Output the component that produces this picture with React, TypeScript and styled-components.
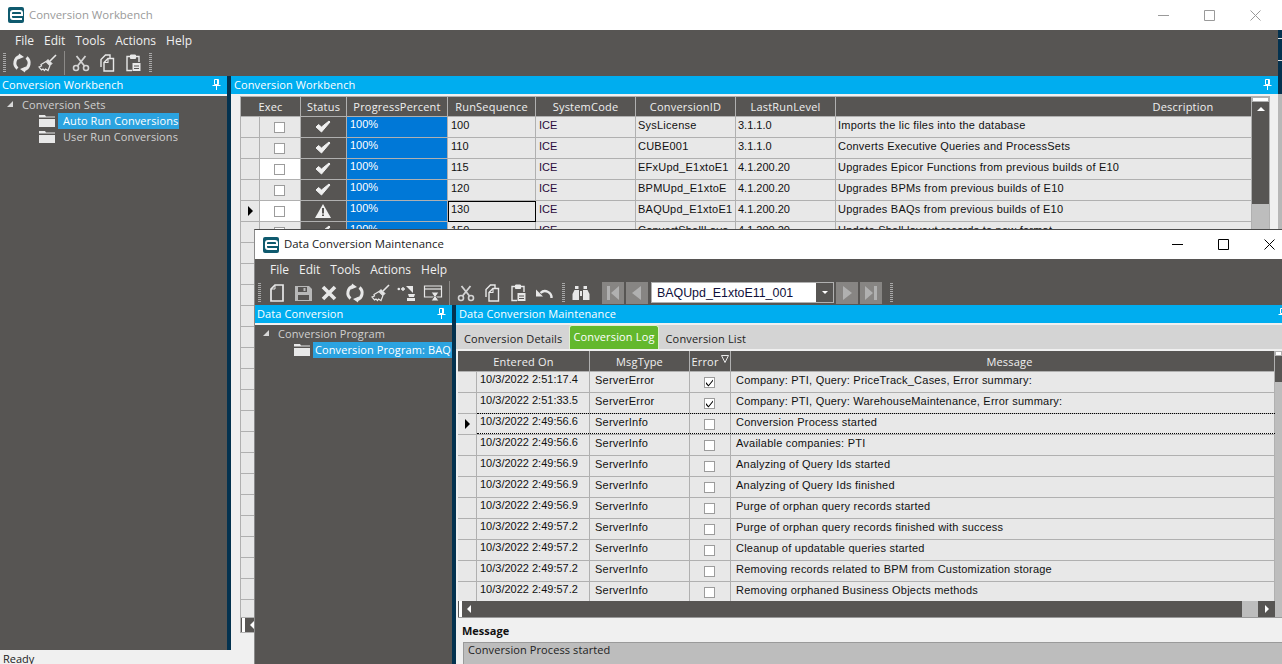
import React from "react";
import styled, { createGlobalStyle } from "styled-components";

const GlobalStyle = createGlobalStyle`
  html, body {
    margin: 0;
    padding: 0;
    overflow: hidden;
  }
  body {
    font-family: "Liberation Sans", Arial, sans-serif;
    font-size: 11px;
  }
`;

const DARK = "#575553";
const BLUE = "#00adef";
const LIGHT = "#e8e8e8";
const LINE = "#b0b0b0";
const NAVY = "#04324f";
const TRACK = "#bdbdbd";

const Icon: React.FC<{ children: React.ReactNode }> = ({ children }) => (
  <svg width={20} height={20} viewBox="0 0 20 20" fill="none" stroke="#e8e8e8" strokeWidth="1.6" style={{ flex: "none" }}>
    {children}
  </svg>
);

const SyncIcon = () => (
  <Icon>
    <path d="M5.500 15.500A7 7 0 0 1 8 3.300" strokeWidth="3" />
    <path d="M14.500 4.500A7 7 0 0 1 12 16.700" strokeWidth="3" />
    <path d="M7 .5l5 3.500-6 2.500zM13 19.500L8 16l6-2.500z" fill="#e8e8e8" stroke="none" />
  </Icon>
);
const BroomIcon = () => (
  <Icon>
    <path d="M18 2l-6 6" strokeWidth="1.600" />
    <path d="M10 6.500l4 4-1.500 1.500-4-4z" fill="#e8e8e8" stroke="#e8e8e8" strokeWidth="1" />
    <path d="M8 8.500l4 4-2 5-2.500-1.500-1 1.500-1.500-1.500-1.500 1-2.500-3 2.500-1-.5-1.500z" strokeWidth="1.200" />
  </Icon>
);
const CutIcon = () => (
  <Icon>
    <circle cx="5" cy="15" r="2.500" stroke="#d4d4d4" />
    <circle cx="15" cy="15" r="2.500" stroke="#d4d4d4" />
    <path d="M6.500 13L14.500 3M13.500 13L5.500 3" stroke="#d4d4d4" strokeWidth="1.800" />
  </Icon>
);
const CopyIcon = () => (
  <Icon>
    <path d="M4 14V6.500L8.500 2H13v3" strokeWidth="1.400" />
    <path d="M7 9.500l4-4h5.500V18H7z" strokeWidth="1.400" />
    <path d="M11 5.500v4H7" strokeWidth="1.100" />
  </Icon>
);
const PasteIcon = () => (
  <Icon>
    <path d="M7 3.500H4v14h5M13 3.500h3V9" strokeWidth="1.400" />
    <path d="M7.500 2h5v3.500h-5z" fill="#e8e8e8" stroke="#e8e8e8" strokeWidth="1" />
    <path d="M9.500 10h8v8h-8z" fill="#e8e8e8" stroke="none" />
    <path d="M11 13h5M11 15.500h5" stroke="#575553" strokeWidth="1" />
  </Icon>
);
const NewIcon = () => (
  <Icon>
    <path d="M8 2h8v16H4V6z" strokeWidth="1.700" />
    <path d="M8 2.500V6H4" strokeWidth="1" />
  </Icon>
);
const SaveIcon = () => (
  <Icon>
    <path d="M2 3h14l3 3v12H2z" fill="#b8b8b8" stroke="none" />
    <path d="M5 4h9v5H5zM5 12h11v5H5z" fill="#575553" stroke="none" />
    <path d="M10.500 5h2v3h-2z" fill="#b8b8b8" stroke="none" />
  </Icon>
);
const DeleteIcon = () => (
  <Icon>
    <path d="M4 4l12 12M16 4L4 16" strokeWidth="3.600" />
  </Icon>
);
const ArrowIcon = () => (
  <Icon>
    <circle cx="1.800" cy="6" r="1.300" fill="#e8e8e8" stroke="none" />
    <path d="M4 6h4M6 4v4" strokeWidth="1.400" />
    <path d="M9 3h7v7z" fill="#e8e8e8" stroke="none" />
    <path d="M11 11h7l-1 3h-5zM10 15h8v3h-8z" fill="#e8e8e8" stroke="none" />
  </Icon>
);
const ReportIcon = () => (
  <Icon>
    <path d="M1.500 3h17v11h-17z" strokeWidth="1.200" />
    <path d="M1.500 6h17" strokeWidth="1.200" />
    <path d="M8 9h8l-3 4.500 3 4.500H8l3-4.500z" fill="#e8e8e8" stroke="#575553" strokeWidth="1" />
  </Icon>
);
const UndoIcon = () => (
  <Icon>
    <path d="M17.500 15a6.500 6.500 0 0 0-11-5" strokeWidth="2.400" />
    <path d="M2 6.500v7h7z" fill="#e8e8e8" stroke="none" />
  </Icon>
);
const BinocularsIcon = () => (
  <Icon>
    <path d="M3.500 7h4.500v10H1.500v-6zM12 7h4.500l2 4v6H12z" fill="#e8e8e8" stroke="none" />
    <path d="M4 3h3.500v3H4zM12.500 3H16v3h-3.500zM9 8h2v5H9z" fill="#e8e8e8" stroke="none" />
  </Icon>
);
const PinIcon = () => (
  <svg width="9" height="11" viewBox="0 0 9 11" fill="none" stroke="#fff" style={{ flex: "none" }}>
    <path d="M2.500.5h4v5h-4z" />
    <path d="M.5 6.500h8" />
    <path d="M4.500 7v4" />
    <path d="M5.500 1v4" />
  </svg>
);
const FolderIcon = () => (
  <svg width="16" height="12" viewBox="0 0 16 12" style={{ flex: "none" }}>
    <path d="M0 2.500V0h6l1 1.500h9v1z" fill="#e8e8e8" />
    <path d="M0 4h16v8H0z" fill="#e8e8e8" />
  </svg>
);
const CheckGlyph = () => (
  <svg width="16" height="14" viewBox="0 0 16 14">
    <path d="M1 7l5.500 5L15 2l-1-1-7.500 6L3.500 4.500z" fill="#f0f0f0" stroke="#f0f0f0" />
  </svg>
);
const WarnGlyph = () => (
  <svg width="16" height="14" viewBox="0 0 16 14">
    <path d="M8 0l8 14H0z" fill="#f0f0f0" />
    <path d="M7 4h2v5.500H7zM7 10.500h2V12H7z" fill="#575553" />
  </svg>
);

const Desktop = styled.div`
  width: 1282px;
  height: 664px;
  position: relative;
  overflow: hidden;
  display: flex;
`;

const BackWindow = styled.div`
  width: 1278px;
  height: 664px;
  flex: none;
  display: flex;
  flex-direction: column;
  background: #f0f0f0;
`;

const DesktopEdge = styled.div`
  flex: 1;
  background: linear-gradient(
    to bottom,
    #fff 0 30px,
    ${NAVY} 30px 38px,
    #e0e0e0 38px 39px,
    ${NAVY} 39px 60px,
    #e0e0e0 60px 61px,
    ${NAVY} 61px 94px,
    #b8b8b8 94px
  );
`;

const FrontWindow = styled.div`
  position: absolute;
  left: 254px;
  top: 229px;
  width: 1028px;
  height: 435px;
  display: flex;
  flex-direction: column;
  background: ${LIGHT};
  border-top: 1px solid #4a4a4a;
  border-left: 1px solid #8a8a8a;
  box-sizing: border-box;
`;

const TitleBar = styled.div<{ $h: number }>`
  height: ${(p) => p.$h}px;
  flex: none;
  display: flex;
  align-items: center;
  padding-left: 8px;
  gap: 5px;
  background: #fff;
`;

const AppLogo = styled.div`
  width: 16px;
  height: 16px;
  border-radius: 2px;
  background: #0f5a6e;
  display: flex;
  align-items: center;
  justify-content: center;
`;

const WindowTitle = styled.span<{ $active?: boolean }>`
  font-family: "Open Sans", sans-serif;
  font-size: 11.4px;
  color: ${(p) => (p.$active ? "#1a1a1a" : "#9a9a9a")};
  flex: 1;
  margin-top: -2px;
`;

const WindowButtons = styled.div<{ $active?: boolean; $right: number }>`
  display: flex;
  gap: 35px;
  padding-right: ${(p) => p.$right}px;
  color: ${(p) => (p.$active ? "#000" : "#9a9a9a")};
`;

const WinGlyph = styled.svg`
  width: 11px;
  height: 11px;
  fill: none;
  stroke: currentColor;
`;

const MenuBar = styled.div<{ $h: number }>`
  height: ${(p) => p.$h}px;
  flex: none;
  background: ${DARK};
  display: flex;
  align-items: center;
  padding-left: 15px;
  gap: 10px;
  color: #f0f0f0;
  font-family: "Open Sans", sans-serif;
  font-size: 12px;
`;

const ToolBar = styled.div<{ $h: number; $pad: number }>`
  height: ${(p) => p.$h}px;
  flex: none;
  background: ${DARK};
  display: flex;
  align-items: center;
  padding-left: ${(p) => p.$pad}px;
  gap: 6px;
`;

const Grip = styled.div<{ $ml?: number }>`
  width: 3px;
  height: 20px;
  flex: none;
  margin-left: ${(p) => p.$ml ?? 0}px;
  background: repeating-linear-gradient(to bottom, #a8a8a8 0 1px, transparent 1px 2px);
`;

const ToolSep = styled.div`
  width: 1px;
  height: 24px;
  flex: none;
  background: #8c8a88;
`;

const NavButton = styled.div<{ $ml: number }>`
  width: 22px;
  height: 22px;
  flex: none;
  background: #878583;
  display: flex;
  align-items: center;
  justify-content: center;
  margin-left: ${(p) => p.$ml}px;
`;

const NavGlyph = styled.svg`
  width: 16px;
  height: 16px;
  fill: #b0b0b0;
`;

const Combo = styled.div`
  width: 183px;
  height: 21px;
  flex: none;
  margin-left: -3px;
  box-sizing: border-box;
  border: 1px solid #b0b0b0;
  background: #fff;
  display: flex;
  align-items: center;
  padding-left: 5px;
  font-size: 12.4px;
  color: #10103a;
  justify-content: space-between;
`;

const ComboArrow = styled.div`
  width: 17px;
  height: 19px;
  background: ${DARK};
  display: flex;
  align-items: center;
  justify-content: center;
`;

const Triangle = styled.div<{ $dir: "left" | "right" | "up" | "down"; $size: number }>`
  width: 0;
  height: 0;
  flex: none;
  ${(p) => {
    const s = p.$size;
    const across = `${s}px solid transparent`;
    const solid = `${s}px solid #fff`;
    if (p.$dir === "left") return `border-top: ${across}; border-bottom: ${across}; border-right: ${solid};`;
    if (p.$dir === "right") return `border-top: ${across}; border-bottom: ${across}; border-left: ${solid};`;
    if (p.$dir === "up") return `border-left: ${across}; border-right: ${across}; border-bottom: ${solid};`;
    return `border-left: ${across}; border-right: ${across}; border-top: ${solid};`;
  }}
`;

const Workspace = styled.div`
  flex: 1;
  min-height: 0;
  display: flex;
`;

const SidePanel = styled.div<{ $w: number }>`
  width: ${(p) => p.$w}px;
  flex: none;
  display: flex;
  flex-direction: column;
  background: ${DARK};
`;

const Splitter = styled.div`
  width: 4px;
  flex: none;
  background: ${NAVY};
`;

const MainPanel = styled.div`
  flex: 1;
  min-width: 0;
  display: flex;
  flex-direction: column;
  background: #f0f0f0;
`;

const PanelHeader = styled.div<{ $left: number }>`
  height: 18px;
  flex: none;
  box-sizing: border-box;
  background: ${BLUE};
  color: #fff;
  font-family: "Open Sans", sans-serif;
  font-size: 11px;
  letter-spacing: 0.1px;
  display: flex;
  align-items: center;
  justify-content: space-between;
  padding: 0 6px 2px ${(p) => p.$left}px;
  white-space: nowrap;
  overflow: hidden;
`;

const CutOffPin = styled.div`
  margin-right: -11px;
  display: flex;
`;

const PanelGap = styled.div`
  height: 2px;
  flex: none;
  background: #f0f0f0;
`;

const Tree = styled.div`
  padding-top: 1px;
  color: #d0d0d0;
  font-family: "Open Sans", sans-serif;
  font-size: 11px;
  letter-spacing: 0.1px;
`;

const TreeRow = styled.div<{ $indent: number; $root?: boolean }>`
  height: 16px;
  box-sizing: border-box;
  padding-bottom: ${(p) => (p.$root ? 2 : 0)}px;
  display: flex;
  align-items: center;
  padding-left: ${(p) => p.$indent}px;
  white-space: nowrap;
  overflow: hidden;
`;

const Expander = styled.div`
  width: 0;
  height: 0;
  margin-right: 9px;
  border-left: 6px solid transparent;
  border-bottom: 6px solid #d8d8d8;
`;

const TreeLabel = styled.span<{ $selected?: boolean; $pad: number }>`
  margin-left: 3px;
  padding: 0 1px 0 ${(p) => p.$pad}px;
  line-height: 16px;
  background: ${(p) => (p.$selected ? "#2ba3e0" : "transparent")};
  color: ${(p) => (p.$selected ? "#fff" : "#d0d0d0")};
`;

const BackGridArea = styled.div`
  flex: 1;
  min-height: 0;
  padding-left: 9px;
`;

const GridFrame = styled.div`
  width: 1030px;
  height: 521px;
  box-sizing: border-box;
  border: 1px solid ${LINE};
  border-bottom: none;
  display: flex;
  overflow: hidden;
`;

const Grid = styled.div<{ $columns: string; $head: number }>`
  flex: 1;
  display: grid;
  grid-template-columns: ${(p) => p.$columns};
  grid-template-rows: ${(p) => p.$head}px;
  grid-auto-rows: 21px;
  align-content: start;
  position: relative;
`;

const VBar = styled.div<{ $w: number }>`
  width: ${(p) => p.$w}px;
  flex: none;
  display: flex;
  flex-direction: column;
  background: ${TRACK};
`;

const VBarButton = styled.div<{ $h: number }>`
  height: ${(p) => p.$h}px;
  flex: none;
  background: ${DARK};
  display: flex;
  flex-direction: column;
  align-items: center;
`;

const ScrollNotch = styled.div`
  width: 100%;
  height: 5px;
  flex: none;
  box-sizing: border-box;
  background: #fff;
  border: 1px solid ${LINE};
`;

const UpArrowSlot = styled.div`
  margin-top: 5px;
`;

const HeaderCell = styled.div<{ $span?: number; $padLeft?: number }>`
  grid-column: span ${(p) => p.$span ?? 1};
  box-sizing: border-box;
  background: ${DARK};
  color: #f0f0f0;
  font-family: "Open Sans", sans-serif;
  font-size: 11px;
  letter-spacing: 0.2px;
  display: flex;
  align-items: center;
  justify-content: center;
  padding-left: ${(p) => p.$padLeft ?? 0}px;
  border-right: 1px solid ${LINE};
  border-bottom: 1px solid ${LINE};
  white-space: nowrap;
  overflow: hidden;
`;

const FilterMark = styled.svg`
  width: 8px;
  height: 8px;
  margin: -4px 0 0 2px;
  flex: none;
  fill: none;
  stroke: #e8e8e8;
`;

const Cell = styled.div<{
  $bg?: string;
  $color?: string;
  $focus?: boolean;
  $center?: boolean;
  $dy?: number;
  $pad?: number;
  $tight?: boolean;
}>`
  box-sizing: border-box;
  background: ${(p) => p.$bg ?? LIGHT};
  color: ${(p) => p.$color ?? "#111"};
  border-right: 1px solid ${LINE};
  border-bottom: 1px solid ${LINE};
  padding: ${(p) => p.$dy ?? 2}px ${(p) => (p.$center ? 1 : 0)}px 0 ${(p) => (p.$center ? 0 : p.$pad ?? 3)}px;
  display: flex;
  align-items: ${(p) => (p.$center ? "center" : "flex-start")};
  justify-content: ${(p) => (p.$center ? "center" : "flex-start")};
  white-space: nowrap;
  overflow: hidden;
  line-height: 13px;
  font-size: 11px;
  letter-spacing: ${(p) => (p.$tight ? 0 : 0.23)}px;
  ${(p) => (p.$focus ? "outline: 1px solid #000; outline-offset: -1px;" : "")}
`;

const FocusRow = styled.div`
  position: absolute;
  top: 62px;
  left: 19px;
  right: 0;
  height: 21px;
  box-sizing: border-box;
  border-top: 1px dotted #000;
  border-bottom: 1px dotted #000;
  pointer-events: none;
`;

const Box = styled.div`
  width: 11px;
  height: 11px;
  box-sizing: border-box;
  background: #fff;
  border: 1px solid #9c9c9c;
  display: flex;
  align-items: center;
  justify-content: center;
`;

const RowArrow = styled.div`
  width: 0;
  height: 0;
  margin-left: 2px;
  border-left: 5px solid #000;
  border-top: 5px solid transparent;
  border-bottom: 5px solid transparent;
`;

const BackHScroll = styled.div`
  width: 1030px;
  height: 16px;
  box-sizing: border-box;
  background: ${DARK};
  border: 1px solid ${LINE};
  display: flex;
  align-items: center;
`;

const ScrollStripe = styled.div`
  width: 3px;
  align-self: stretch;
  flex: none;
  margin-left: 1px;
  background: #fff;
`;

const ArrowSlot = styled.div`
  width: 14px;
  flex: none;
  display: flex;
  align-items: center;
  justify-content: center;
`;

const StatusBar = styled.div`
  height: 14px;
  flex: none;
  background: #f0f0f0;
  padding-left: 3px;
  font-family: "Open Sans", sans-serif;
  font-size: 11px;
  line-height: 18px;
  color: #222;
`;

const TabStrip = styled.div`
  height: 24px;
  flex: none;
  padding-left: 4px;
  background: #d4d4d4;
  display: flex;
  align-items: flex-end;
  gap: 3px;
`;

const Tab = styled.div<{ $active?: boolean }>`
  height: ${(p) => (p.$active ? 24 : 20)}px;
  box-sizing: border-box;
  padding: 0 ${(p) => (p.$active ? 3 : 4)}px 2px;
  font-family: "Open Sans", sans-serif;
  font-size: 11px;
  letter-spacing: 0.15px;
  display: flex;
  align-items: center;
  color: ${(p) => (p.$active ? "#fff" : "#222")};
  background: ${(p) => (p.$active ? "#63b82d" : "transparent")};
  border: ${(p) => (p.$active ? "1px solid #dff0d0" : "none")};
  border-bottom: none;
  border-radius: ${(p) => (p.$active ? "3px 3px 0 0" : "0")};
  white-space: nowrap;
`;

const LogArea = styled.div`
  height: 250px;
  flex: none;
  margin: 2px 0 0 2px;
  display: flex;
  overflow: hidden;
`;

const HScroll = styled.div`
  height: 17px;
  flex: none;
  margin-left: 2px;
  display: flex;
  align-items: stretch;
  background: ${DARK};
  border-bottom: 1px solid #999;
  box-sizing: border-box;
`;

const HScrollFill = styled.div`
  flex: 1;
`;

const HScrollThumb = styled.div<{ $w: number }>`
  width: ${(p) => p.$w}px;
  flex: none;
  background: ${TRACK};
`;

const RightSlot = styled.div`
  width: 17px;
  flex: none;
  display: flex;
  align-items: center;
  justify-content: center;
`;

const MessageLabel = styled.div`
  height: 24px;
  flex: none;
  box-sizing: border-box;
  padding: 0 0 0 6px;
  font-weight: bold;
  font-family: "Open Sans", sans-serif;
  font-size: 11px;
  display: flex;
  align-items: center;
  color: #111;
`;

const MessageBox = styled.div`
  flex: 1;
  margin-left: 7px;
  padding: 0 0 0 4px;
  background: ${TRACK};
  border-top: 1px solid #9a9a9a;
  border-left: 1px solid #9a9a9a;
  font-family: "Open Sans", sans-serif;
  font-size: 11px;
  line-height: 14px;
  letter-spacing: 0.1px;
  color: #222;
`;

const backRows = [
  ["100", "ICE", "SysLicense", "3.1.1.0", "Imports the lic files into the database"],
  ["110", "ICE", "CUBE001", "3.1.1.0", "Converts Executive Queries and ProcessSets"],
  ["115", "ICE", "EFxUpd_E1xtoE1", "4.1.200.20", "Upgrades Epicor Functions from previous builds of E10"],
  ["120", "ICE", "BPMUpd_E1xtoE", "4.1.200.20", "Upgrades BPMs from previous builds of E10"],
  ["130", "ICE", "BAQUpd_E1xtoE1", "4.1.200.20", "Upgrades BAQs from previous builds of E10"],
  ["150", "ICE", "ConvertShellLayo", "4.1.200.20", "Update Shell layout records to new format"],
];

const logRows: [string, string, boolean, string][] = [
  ["10/3/2022 2:51:17.4", "ServerError", true, "Company: PTI, Query: PriceTrack_Cases, Error summary:"],
  ["10/3/2022 2:51:33.5", "ServerError", true, "Company: PTI, Query: WarehouseMaintenance, Error summary:"],
  ["10/3/2022 2:49:56.6", "ServerInfo", false, "Conversion Process started"],
  ["10/3/2022 2:49:56.6", "ServerInfo", false, "Available companies: PTI"],
  ["10/3/2022 2:49:56.9", "ServerInfo", false, "Analyzing of Query Ids started"],
  ["10/3/2022 2:49:56.9", "ServerInfo", false, "Analyzing of Query Ids finished"],
  ["10/3/2022 2:49:56.9", "ServerInfo", false, "Purge of orphan query records started"],
  ["10/3/2022 2:49:57.2", "ServerInfo", false, "Purge of orphan query records finished with success"],
  ["10/3/2022 2:49:57.2", "ServerInfo", false, "Cleanup of updatable queries started"],
  ["10/3/2022 2:49:57.2", "ServerInfo", false, "Removing records related to BPM from Customization storage"],
  ["10/3/2022 2:49:57.2", "ServerInfo", false, "Removing orphaned Business Objects methods"],
];

const Logo = () => (
  <AppLogo>
    <svg width="13" height="10" viewBox="0 0 13 10" fill="none" stroke="#fff" strokeWidth="2">
      <path d="M12 9H3a2 2 0 0 1-2-2V3a2 2 0 0 1 2-2h7a2 2 0 0 1 2 2v2H2" />
    </svg>
  </AppLogo>
);

const MinMaxClose = () => (
  <>
    <WinGlyph viewBox="0 0 11 11"><path d="M0 5.500h11" /></WinGlyph>
    <WinGlyph viewBox="0 0 11 11"><path d="M.5.5h10v10H.5z" /></WinGlyph>
    <WinGlyph viewBox="0 0 11 11"><path d="M.5.5l10 10M10.500.5l-10 10" /></WinGlyph>
  </>
);

const Menus = () => (
  <>
    <span>File</span>
    <span>Edit</span>
    <span>Tools</span>
    <span>Actions</span>
    <span>Help</span>
  </>
);

const App: React.FC = () => {
  return (
    <Desktop>
      <GlobalStyle />
      <BackWindow>
        <TitleBar $h={30}>
          <Logo />
          <WindowTitle>Conversion Workbench</WindowTitle>
          <WindowButtons $right={17}>
            <MinMaxClose />
          </WindowButtons>
        </TitleBar>
        <MenuBar $h={20}>
          <Menus />
        </MenuBar>
        <ToolBar $h={26} $pad={3}>
          <Grip />
          <SyncIcon />
          <BroomIcon />
          <ToolSep />
          <CutIcon />
          <CopyIcon />
          <PasteIcon />
          <Grip />
        </ToolBar>
        <Workspace>
          <SidePanel $w={227}>
            <PanelHeader $left={2}>
              Conversion Workbench <PinIcon />
            </PanelHeader>
            <PanelGap />
            <Tree>
              <TreeRow $indent={7} $root>
                <Expander />
                Conversion Sets
              </TreeRow>
              <TreeRow $indent={39}>
                <FolderIcon />
                <TreeLabel $selected $pad={5}>Auto Run Conversions</TreeLabel>
              </TreeRow>
              <TreeRow $indent={39}>
                <FolderIcon />
                <TreeLabel $pad={5}>User Run Conversions</TreeLabel>
              </TreeRow>
            </Tree>
          </SidePanel>
          <Splitter />
          <MainPanel>
            <PanelHeader $left={3}>
              Conversion Workbench <PinIcon />
            </PanelHeader>
            <PanelGap />
            <BackGridArea>
              <GridFrame>
                <Grid $head={20} $columns="19px 41px 46px 101px 88px 100px 100px 100px 416px">
                  <HeaderCell $span={2}>Exec</HeaderCell>
                  <HeaderCell>Status</HeaderCell>
                  <HeaderCell>ProgressPercent</HeaderCell>
                  <HeaderCell>RunSequence</HeaderCell>
                  <HeaderCell>SystemCode</HeaderCell>
                  <HeaderCell>ConversionID</HeaderCell>
                  <HeaderCell>LastRunLevel</HeaderCell>
                  <HeaderCell $padLeft={279}>Description</HeaderCell>
                  {backRows.map((r, i) => (
                    <React.Fragment key={r[0]}>
                      <Cell $center $dy={0}>{i === 4 && <RowArrow />}</Cell>
                      <Cell $center $dy={0} $bg={i === 2 || i === 4 ? "#fff" : LIGHT}>
                        <Box />
                      </Cell>
                      <Cell $center $dy={0} $bg={DARK}>
                        {i === 4 ? <WarnGlyph /> : <CheckGlyph />}
                      </Cell>
                      <Cell $bg="#0078d7" $color="#fff" $dy={1} $tight>100%</Cell>
                      <Cell $focus={i === 4} $tight>{r[0]}</Cell>
                      <Cell $color="#2a0a3a" $tight>{r[1]}</Cell>
                      <Cell $pad={2}>{r[2]}</Cell>
                      <Cell $tight $pad={2}>{r[3]}</Cell>
                      <Cell $pad={2}>{r[4]}</Cell>
                    </React.Fragment>
                  ))}
                  {Array.from({ length: 18 }).map((_, i) => (
                    <React.Fragment key={i}>
                      <Cell />
                      <Cell />
                      <Cell />
                      <Cell />
                      <Cell />
                      <Cell />
                      <Cell />
                      <Cell />
                      <Cell />
                    </React.Fragment>
                  ))}
                </Grid>
                <VBar $w={17}>
                  <VBarButton $h={107}>
                    <ScrollNotch />
                    <UpArrowSlot>
                      <Triangle $dir="up" $size={4} />
                    </UpArrowSlot>
                  </VBarButton>
                </VBar>
              </GridFrame>
              <BackHScroll>
                <ScrollStripe />
                <ArrowSlot>
                  <Triangle $dir="left" $size={4} />
                </ArrowSlot>
              </BackHScroll>
            </BackGridArea>
          </MainPanel>
        </Workspace>
        <StatusBar>Ready</StatusBar>
      </BackWindow>
      <DesktopEdge />

      <FrontWindow>
        <TitleBar $h={29}>
          <Logo />
          <WindowTitle $active>Data Conversion Maintenance</WindowTitle>
          <WindowButtons $active $right={7}>
            <MinMaxClose />
          </WindowButtons>
        </TitleBar>
        <MenuBar $h={21}>
          <Menus />
        </MenuBar>
        <ToolBar $h={25} $pad={3}>
          <Grip />
          <NewIcon />
          <SaveIcon />
          <DeleteIcon />
          <SyncIcon />
          <BroomIcon />
          <ArrowIcon />
          <ReportIcon />
          <ToolSep />
          <CutIcon />
          <CopyIcon />
          <PasteIcon />
          <UndoIcon />
          <Grip $ml={2} />
          <BinocularsIcon />
          <NavButton $ml={5}>
            <NavGlyph viewBox="0 0 16 16"><path d="M2 1h3v14H2zM14 1v14L6 8z" /></NavGlyph>
          </NavButton>
          <NavButton $ml={-4}>
            <NavGlyph viewBox="0 0 16 16"><path d="M12 1v14L3 8z" /></NavGlyph>
          </NavButton>
          <Combo>
            BAQUpd_E1xtoE11_001
            <ComboArrow>
              <Triangle $dir="down" $size={3} />
            </ComboArrow>
          </Combo>
          <NavButton $ml={-4}>
            <NavGlyph viewBox="0 0 16 16"><path d="M4 1v14l9-7z" /></NavGlyph>
          </NavButton>
          <NavButton $ml={-4}>
            <NavGlyph viewBox="0 0 16 16"><path d="M2 1v14l8-7zM11 1h3v14h-3z" /></NavGlyph>
          </NavButton>
          <Grip $ml={2} />
        </ToolBar>
        <Workspace>
          <SidePanel $w={197}>
            <PanelHeader $left={2}>
              Data Conversion <PinIcon />
            </PanelHeader>
            <PanelGap />
            <Tree>
              <TreeRow $indent={8} $root>
                <Expander />
                Conversion Program
              </TreeRow>
              <TreeRow $indent={39}>
                <FolderIcon />
                <TreeLabel $selected $pad={2}>Conversion Program: BAQ</TreeLabel>
              </TreeRow>
            </Tree>
          </SidePanel>
          <Splitter />
          <MainPanel>
            <PanelHeader $left={3}>
              Data Conversion Maintenance
              <CutOffPin>
                <PinIcon />
              </CutOffPin>
            </PanelHeader>
            <PanelGap />
            <TabStrip>
              <Tab>Conversion Details</Tab>
              <Tab $active>Conversion Log</Tab>
              <Tab>Conversion List</Tab>
            </TabStrip>
            <LogArea>
              <Grid $head={21} $columns="19px 113px 100px 41px 544px">
                <HeaderCell $span={2}>Entered On</HeaderCell>
                <HeaderCell>MsgType</HeaderCell>
                <HeaderCell>
                  Error
                  <FilterMark viewBox="0 0 8 8"><path d="M.5.5h7L4 7.500z" /></FilterMark>
                </HeaderCell>
                <HeaderCell $padLeft={14}>Message</HeaderCell>
                {logRows.map((r, i) => (
                  <React.Fragment key={i}>
                    <Cell $center $dy={0}>{i === 2 && <RowArrow />}</Cell>
                    <Cell $dy={1} $tight>{r[0]}</Cell>
                    <Cell $pad={5}>{r[1]}</Cell>
                    <Cell $center $dy={0}>
                      <Box>
                        {r[2] && (
                          <svg width="9" height="9" viewBox="0 0 9 9">
                            <path d="M1 4l2.500 3L8 1.500V3L3.500 8.500 1 6z" fill="#000" />
                          </svg>
                        )}
                      </Box>
                    </Cell>
                    <Cell $pad={5}>{r[3]}</Cell>
                  </React.Fragment>
                ))}
                <FocusRow />
              </Grid>
              <VBar $w={7}>
                <VBarButton $h={31}>
                  <ScrollNotch />
                </VBarButton>
              </VBar>
            </LogArea>
            <HScroll>
              <ScrollStripe />
              <ArrowSlot>
                <Triangle $dir="left" $size={4} />
              </ArrowSlot>
              <HScrollFill />
              <HScrollThumb $w={16} />
              <RightSlot>
                <Triangle $dir="right" $size={4} />
              </RightSlot>
              <HScrollThumb $w={7} />
            </HScroll>
            <MessageLabel>Message</MessageLabel>
            <MessageBox>Conversion Process started</MessageBox>
          </MainPanel>
        </Workspace>
      </FrontWindow>
    </Desktop>
  );
};

export default App;
